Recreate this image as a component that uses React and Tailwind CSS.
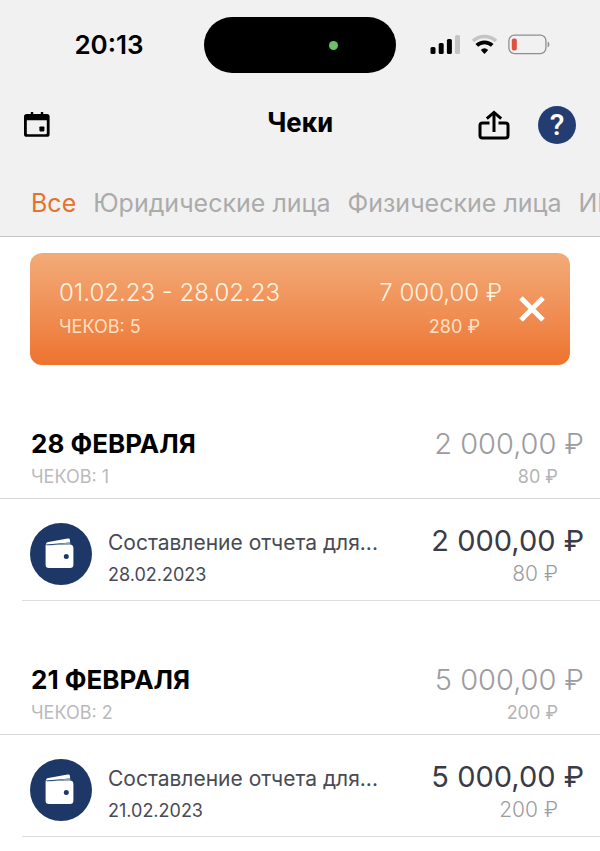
import React, { useState } from "react";

const tabs = ["Все", "Юридические лица", "Физические лица", "ИП"];

const groups = [
  {
    day: "28 ФЕВРАЛЯ",
    count: 1,
    total: "2 000,00 ₽",
    tax: "80 ₽",
    checks: [
      { title: "Составление отчета для...", date: "28.02.2023", sum: "2 000,00 ₽", tax: "80 ₽" },
    ],
  },
  {
    day: "21 ФЕВРАЛЯ",
    count: 2,
    total: "5 000,00 ₽",
    tax: "200 ₽",
    checks: [
      { title: "Составление отчета для...", date: "21.02.2023", sum: "5 000,00 ₽", tax: "200 ₽" },
    ],
  },
];

const StatusIcons = () => (
  <svg width="122" height="22" viewBox="0 0 122 22" aria-hidden="true">
    {/* Signal */}
    <rect x="0.5" y="13" width="5" height="7" rx="1.5" />
    <rect x="8.7" y="9" width="5" height="11" rx="1.5" />
    <rect x="16.9" y="5" width="5" height="15" rx="1.5" />
    <rect x="25" y="1" width="5" height="19" rx="1.5" fill="#c4c4c4" />
    {/* Wifi */}
    <path d="M43 7a17 17 0 0 1 23 0" fill="none" stroke="#c4c4c4" strokeWidth="3.6" />
    <path d="M46.8 11.4a11.2 11.2 0 0 1 15.4 0" fill="none" stroke="#000" strokeWidth="3.8" />
    <path d="M50.8 16a5.6 5.6 0 0 1 7.4 0l-3.7 4z" />
    {/* Battery */}
    <rect x="78.9" y="1.2" width="37" height="18.4" rx="5.5" fill="none" stroke="#8f8f8f" strokeWidth="1.3" />
    <rect x="81.8" y="4.5" width="5" height="12" rx="2" fill="#e0503f" />
    <path d="M117.6 7.5c2.4 1 2.4 5 0 6z" fill="#8f8f8f" />
  </svg>
);

const CalendarIcon = () => (
  <svg width="26" height="26" viewBox="0 0 26 26" aria-hidden="true">
    <path
      fillRule="evenodd"
      d="M6.8 0h2.4v2h7.6V0h2.4v2H23a2.6 2.6 0 0 1 2.6 2.6v17.6A2.6 2.6 0 0 1 23 24.8H2.6A2.6 2.6 0 0 1 0 22.2V4.6A2.6 2.6 0 0 1 2.6 2h4.2zM2.8 8.2v13a1 1 0 0 0 1 1h18a1 1 0 0 0 1-1v-13z"
    />
    <rect x="15.4" y="14.4" width="5" height="5" rx="0.8" />
  </svg>
);

const ShareIcon = () => (
  <svg width="32" height="30" viewBox="0 0 32 30" fill="none" stroke="#000" strokeWidth="3" aria-hidden="true">
    <path d="M11.5 13H4.5a2.5 2.5 0 0 0-2.5 2.5v10A2.5 2.5 0 0 0 4.5 28h23a2.5 2.5 0 0 0 2.5-2.5v-10a2.5 2.5 0 0 0-2.5-2.5h-7" />
    <path d="M16 22V3" />
    <path d="M8.8 8.6 16 2.4l7.2 6.2" />
  </svg>
);

const WalletIcon = () => (
  <svg className="shrink-0" width="62" height="62" viewBox="0 0 62 62" aria-hidden="true">
    <circle cx="31" cy="31" r="31" fill="#1d3866" />
    <path d="M16 21.4c0-1.3.8-2.1 2.4-2.4l19.2-3.5c1.3-.2 2.2.3 2.3 1.3l.2 2.6z" fill="#fff" />
    <path d="M21 21.9l19.3-2.6v2.2z" fill="#8f9bb0" />
    <path
      fillRule="evenodd"
      d="M15.6 21.4c.8.8 1.6 1 2.6.9l21.6-.7c2.3 0 3.6 1.2 3.6 3.4v16.8c0 2.2-1.2 3.3-3.4 3.3H19c-2.3 0-3.4-1.1-3.4-3.3zM36.3 31a2.5 2.5 0 1 0 0 5 2.5 2.5 0 0 0 0-5z"
      fill="#fff"
    />
  </svg>
);

const CheckRow = ({ check }) => (
  <li className="ml-[22px] flex items-start border-b border-[#dcdcdc] pt-6 pr-4 pb-[11px] pl-2">
    <WalletIcon />
    <div className="ml-4 min-w-0 flex-1 text-[#484a54]">
      <p className="truncate text-[21px] leading-10">{check.title}</p>
      <p className="text-[18px] leading-6">{check.date}</p>
    </div>
    <div className="shrink-0 text-right">
      <p className="text-[29px] leading-9 text-[#3a3b45]">{check.sum}</p>
      <p className="mr-[26px] text-[21px] leading-[30px] font-light text-[#9d9d9f]">{check.tax}</p>
    </div>
  </li>
);

const App = () => {
  const [active, setActive] = useState("Все");
  const [showPeriod, setShowPeriod] = useState(true);

  return (
    <div className="min-h-screen overflow-hidden bg-white font-['Inter',sans-serif] text-black">
      <header className="border-b border-[#c6c6c6] bg-[#f1f1f1]">
        {/* Status bar */}
        <div className="grid grid-cols-[1fr_192px_1fr] items-center pt-[17px]">
          <p className="pl-[14px] text-center text-[26px] leading-8 font-semibold">20:13</p>
          <div className="flex h-14 items-center justify-end rounded-full bg-black pr-[58px]">
            <span className="size-[9px] rounded-full bg-[#67c466]" />
          </div>
          <div className="pl-[34px]">
            <StatusIcons />
          </div>
        </div>

        {/* NavBar */}
        <div className="mt-8 grid grid-cols-[1fr_auto_1fr] items-center px-6">
          <button type="button" aria-label="Календарь" className="justify-self-start">
            <CalendarIcon />
          </button>
          <h1 className="pb-1 font-['Liberation_Sans_Narrow','Roboto',sans-serif] text-[28px] leading-9 font-bold">
            Чеки
          </h1>
          <div className="flex items-center justify-end gap-7">
            <button type="button" aria-label="Поделиться">
              <ShareIcon />
            </button>
            <button
              type="button"
              aria-label="Помощь"
              className="size-[38px] rounded-full bg-[#233d73] font-['Roboto',sans-serif] text-[30px] leading-9 font-medium text-white"
            >
              ?
            </button>
          </div>
        </div>

        {/* Tabs */}
        <nav className="mt-[38px] flex gap-[17px] overflow-hidden pb-[13px] pl-[31px] text-[25px] leading-10 whitespace-nowrap">
          {tabs.map((tab) => (
            <button
              key={tab}
              type="button"
              onClick={() => setActive(tab)}
              className={active === tab ? "shrink-0 text-[#e5722f]" : "shrink-0 text-[#ababab]"}
            >
              {tab}
            </button>
          ))}
        </nav>
      </header>

      <main>
        {showPeriod && (
          <section className="mx-[30px] mt-4 flex items-center rounded-xl bg-linear-to-b from-[#f2ab78] to-[#ed732d] py-[22px] pr-6 pl-[29px] text-[#fff3e2]">
            <div className="flex-1">
              <p className="text-[24px] leading-9 font-light">01.02.23 - 28.02.23</p>
              <p className="text-[18px] leading-8 text-[#ffe0c4]">ЧЕКОВ: 5</p>
            </div>
            <div className="text-right">
              <p className="text-[24px] leading-9 font-light">7 000,00 ₽</p>
              <p className="mr-[22px] text-[18px] leading-8 text-[#ffe0c4]">280 ₽</p>
            </div>
            <button type="button" aria-label="Сбросить период" className="ml-4" onClick={() => setShowPeriod(false)}>
              <svg width="28" height="28" viewBox="0 0 28 28" stroke="#fff" strokeWidth="5" aria-hidden="true">
                <path d="M3 3l22 22M25 3 3 25" />
              </svg>
            </button>
          </section>
        )}

        {groups.map((group) => (
          <section key={group.day} className="pt-[61px]">
            <div className="flex justify-between border-b border-[#d6d6d6] pr-4 pb-[6px] pl-[31px]">
              <div>
                <h2 className="text-[26px] leading-9 font-bold">{group.day}</h2>
                <p className="text-[18px] leading-[30px] text-[#bababc]">ЧЕКОВ: {group.count}</p>
              </div>
              <div className="text-right">
                <p className="text-[29px] leading-9 font-light text-[#9c9ca0]">{group.total}</p>
                <p className="mr-[26px] text-[18px] leading-[30px] text-[#b4b4b6]">{group.tax}</p>
              </div>
            </div>
            <ul>
              {group.checks.map((check) => (
                <CheckRow key={check.title} check={check} />
              ))}
            </ul>
          </section>
        ))}
      </main>
    </div>
  );
};

export default App;
